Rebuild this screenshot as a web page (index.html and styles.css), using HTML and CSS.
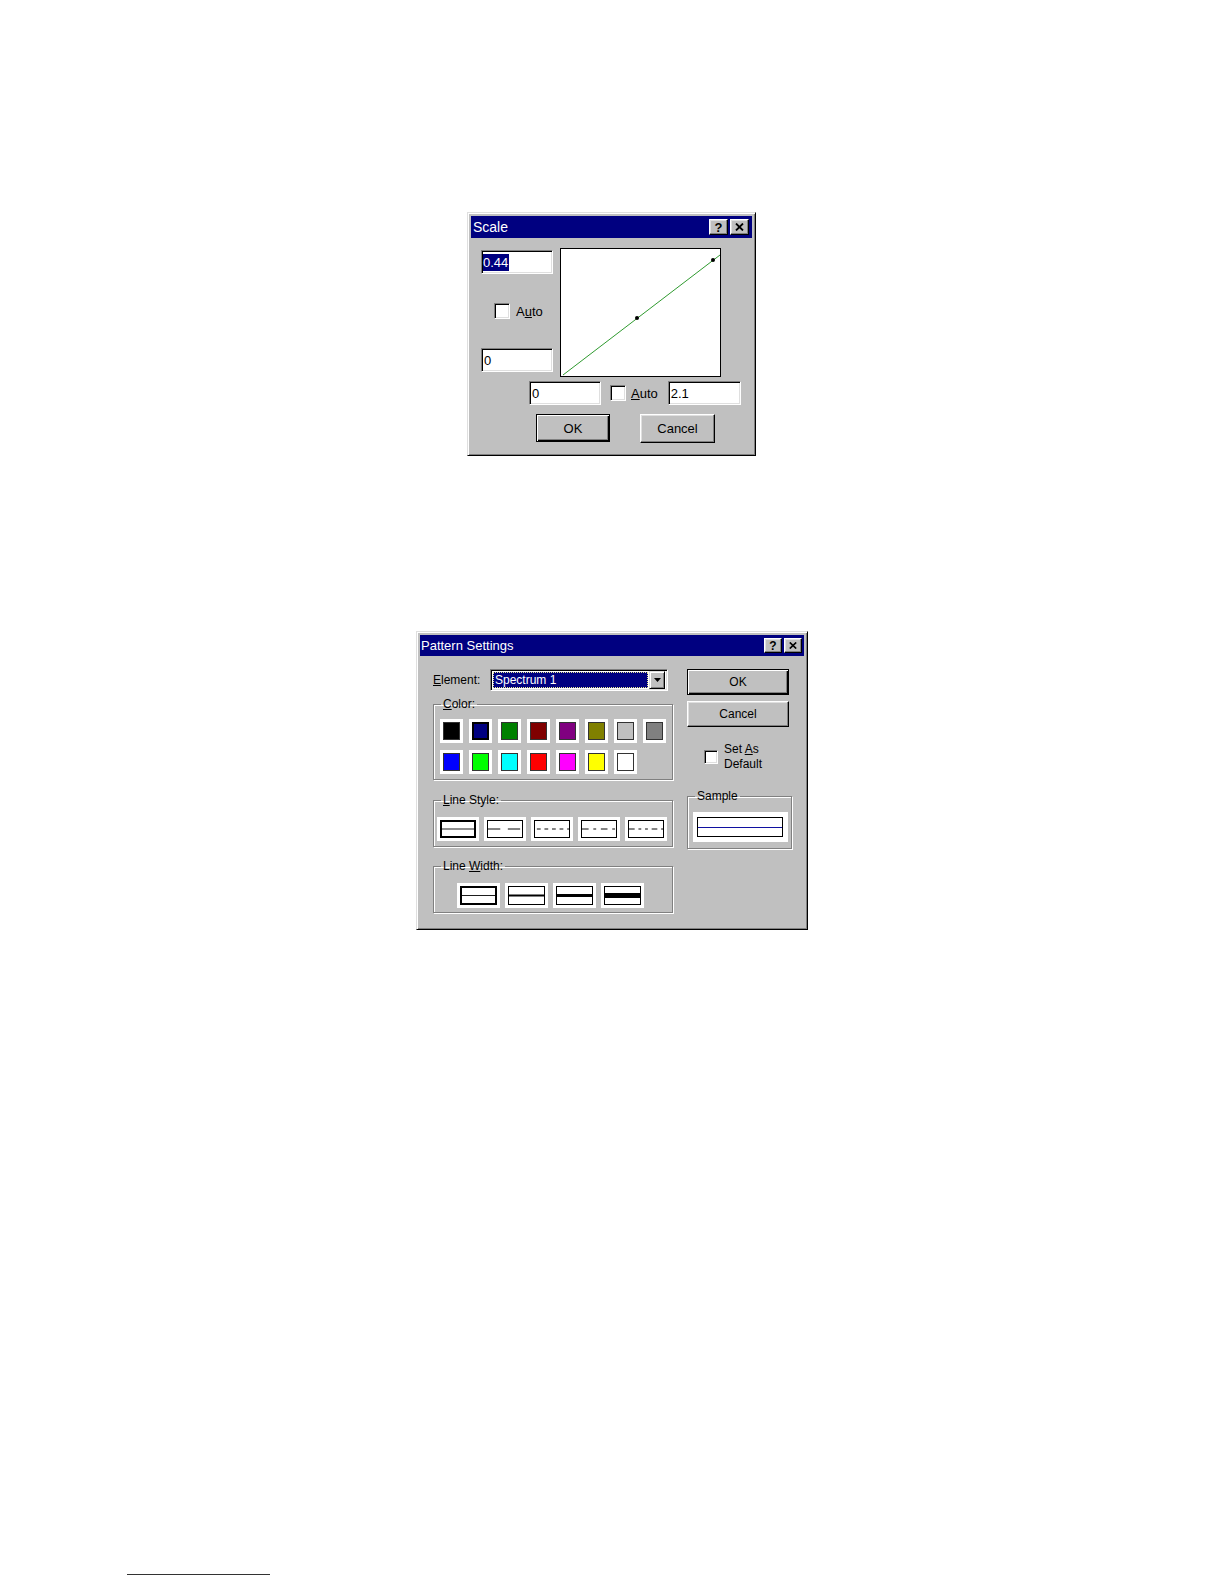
FILE: index.html
```html
<!DOCTYPE html>
<html>
<head>
<meta charset="utf-8">
<title>Dialogs</title>
<link rel="stylesheet" href="styles.css">
</head>
<body>
<div class="page">

  <div class="win scale">
    <div class="titlebar tb-scale">
      <span class="title">Scale</span>
      <span class="tbtns">
        <span class="tbtn help">?</span>
        <span class="tbtn close"><svg width="9" height="8" viewBox="0 0 9 8"><path d="M1 0.5 L8 7.5 M8 0.5 L1 7.5" stroke="#000" stroke-width="1.8" fill="none"/></svg></span>
      </span>
    </div>
    <div class="scale-body">
      <div class="scale-top">
        <div class="scale-left">
          <div class="field f-scale"><span class="sel">0.44</span></div>
          <div class="chk-row scale-chk"><span class="chk chk-lg"></span><span class="lbl">A<u>u</u>to</span></div>
          <div class="field f-scale">0</div>
        </div>
        <div class="plot">
          <svg width="159" height="127" viewBox="0 0 159 127">
            <line x1="2" y1="126" x2="159" y2="6" stroke="#2f9a2f" stroke-width="1"/>
            <circle cx="76" cy="69" r="2" fill="#000"/>
            <circle cx="152" cy="11" r="2" fill="#000"/>
          </svg>
        </div>
      </div>
      <div class="scale-axis">
        <div class="field f-scale">0</div>
        <span class="chk chk-lg axis-chk"></span>
        <span class="lbl axis-lbl"><u>A</u>uto</span>
        <div class="field f-scale axis-max">2.1</div>
      </div>
      <div class="scale-btns">
        <span class="btn btn-default sb-ok">OK</span>
        <span class="btn sb-cancel">Cancel</span>
      </div>
    </div>
  </div>

  <div class="win pattern">
    <div class="titlebar tb-pattern">
      <span class="title">Pattern Settings</span>
      <span class="tbtns">
        <span class="tbtn tbtn-sm help">?</span>
        <span class="tbtn tbtn-sm close"><svg width="8" height="7" viewBox="0 0 8 7"><path d="M0.8 0.5 L7.2 6.5 M7.2 0.5 L0.8 6.5" stroke="#000" stroke-width="1.7" fill="none"/></svg></span>
      </span>
    </div>
    <div class="pattern-body">
      <div class="pcol-left">
        <div class="elem-row">
          <span class="plbl"><u>E</u>lement:</span>
          <div class="combo">
            <div class="combo-sel"><span>Spectrum 1</span></div>
            <span class="combo-btn"><svg width="7" height="4" viewBox="0 0 7 4"><path d="M0 0 H7 L3.5 4 Z" fill="#000"/></svg></span>
          </div>
        </div>

        <fieldset class="group g-color">
          <legend><u>C</u>olor:</legend>
          <div class="swatches">
            <span class="sw"><i style="background:#000000"></i></span>
            <span class="sw sw-on"><i style="background:#000080"></i></span>
            <span class="sw"><i style="background:#008000"></i></span>
            <span class="sw"><i style="background:#800000"></i></span>
            <span class="sw"><i style="background:#800080"></i></span>
            <span class="sw"><i style="background:#808000"></i></span>
            <span class="sw"><i style="background:#c0c0c0"></i></span>
            <span class="sw"><i style="background:#808080"></i></span>
            <span class="sw"><i style="background:#0000ff"></i></span>
            <span class="sw"><i style="background:#00ff00"></i></span>
            <span class="sw"><i style="background:#00ffff"></i></span>
            <span class="sw"><i style="background:#ff0000"></i></span>
            <span class="sw"><i style="background:#ff00ff"></i></span>
            <span class="sw"><i style="background:#ffff00"></i></span>
            <span class="sw"><i style="background:#ffffff"></i></span>
          </div>
        </fieldset>

        <fieldset class="group g-style">
          <legend><u>L</u>ine Style:</legend>
          <div class="cells">
            <span class="cell"><span class="cbox cbox-on"><svg viewBox="0 0 36 16" preserveAspectRatio="none"><line x1="0" y1="8" x2="36" y2="8" stroke="#000" stroke-width="1"/></svg></span></span>
            <span class="cell"><span class="cbox"><svg viewBox="0 0 36 16" preserveAspectRatio="none"><line x1="0" y1="8" x2="36" y2="8" stroke="#000" stroke-width="1" stroke-dasharray="13 8"/></svg></span></span>
            <span class="cell"><span class="cbox"><svg viewBox="0 0 36 16" preserveAspectRatio="none"><line x1="2" y1="8" x2="36" y2="8" stroke="#000" stroke-width="1" stroke-dasharray="4 4"/></svg></span></span>
            <span class="cell"><span class="cbox"><svg viewBox="0 0 36 16" preserveAspectRatio="none"><line x1="0" y1="8" x2="36" y2="8" stroke="#000" stroke-width="1" stroke-dasharray="7 5 3 5"/></svg></span></span>
            <span class="cell"><span class="cbox"><svg viewBox="0 0 36 16" preserveAspectRatio="none"><line x1="0" y1="8" x2="36" y2="8" stroke="#000" stroke-width="1" stroke-dasharray="6 4 3 4 3 4"/></svg></span></span>
          </div>
        </fieldset>

        <fieldset class="group g-width">
          <legend>Line <u>W</u>idth:</legend>
          <div class="cells cells-w">
            <span class="cell"><span class="cbox cbox-on"><svg viewBox="0 0 37 17" preserveAspectRatio="none"><line x1="0" y1="8.5" x2="37" y2="8.5" stroke="#000" stroke-width="1"/></svg></span></span>
            <span class="cell"><span class="cbox"><svg viewBox="0 0 37 17" preserveAspectRatio="none"><line x1="0" y1="8.5" x2="37" y2="8.5" stroke="#000" stroke-width="2"/></svg></span></span>
            <span class="cell"><span class="cbox"><svg viewBox="0 0 37 17" preserveAspectRatio="none"><line x1="0" y1="8.5" x2="37" y2="8.5" stroke="#000" stroke-width="3"/></svg></span></span>
            <span class="cell"><span class="cbox"><svg viewBox="0 0 37 17" preserveAspectRatio="none"><line x1="0" y1="8.5" x2="37" y2="8.5" stroke="#000" stroke-width="5"/></svg></span></span>
          </div>
        </fieldset>
      </div>

      <div class="pcol-right">
        <span class="btn btn-default pb">OK</span>
        <span class="btn pb pb-cancel">Cancel</span>
        <div class="chk-row default-row">
          <span class="chk chk-sm"></span>
          <span class="plbl two-line">Set <u>A</u>s<br>Default</span>
        </div>
        <fieldset class="group g-sample">
          <legend>Sample</legend>
          <div class="sample-well">
            <div class="sample-box"><span class="sample-line"></span></div>
          </div>
        </fieldset>
      </div>
    </div>
  </div>

  <div class="footline"></div>
</div>
</body>
</html>
```

FILE: styles.css
```css
* { box-sizing: border-box; }

body {
  margin: 0;
  background: #ffffff;
  font-family: "Liberation Sans", Arial, sans-serif;
  color: #000;
}

.page {
  padding-top: 212px;
  padding-bottom: 17px;
}

u { text-decoration: underline; text-underline-offset: 1px; }

/* ---------- generic Win95 pieces ---------- */
.win {
  background: #c0c0c0;
  border: 1px solid;
  border-color: #dfdfdf #000 #000 #dfdfdf;
  box-shadow: inset 1px 1px #fff, inset -1px -1px #808080;
  padding: 3px;
}

.titlebar {
  background: #000080;
  color: #fff;
  display: flex;
  align-items: center;
  justify-content: space-between;
}

.tbtns { display: flex; gap: 2px; }

.tbtn {
  display: flex;
  align-items: center;
  justify-content: center;
  width: 19px;
  height: 16px;
  background: #c0c0c0;
  border: 1px solid;
  border-color: #fff #000 #000 #fff;
  box-shadow: inset -1px -1px #808080, inset 1px 1px #dfdfdf;
  color: #000;
  font-weight: bold;
  font-size: 13px;
  line-height: 1;
}

.tbtn-sm { width: 18px; height: 15px; font-size: 12px; }

.btn {
  display: flex;
  align-items: center;
  justify-content: center;
  background: #c0c0c0;
  border: 1px solid;
  border-color: #fff #000 #000 #fff;
  box-shadow: inset -1px -1px #808080, inset 1px 1px #dfdfdf;
}

.btn-default {
  border-color: #000;
  box-shadow: inset 1px 1px #fff, inset -1px -1px #000, inset -2px -2px #808080;
}

.field {
  background: #fff;
  border: 1px solid;
  border-color: #808080 #fff #fff #808080;
  box-shadow: inset 1px 1px #000, inset -1px -1px #dfdfdf;
  display: flex;
  align-items: center;
  padding-left: 2px;
}

.chk {
  display: inline-block;
  background: #fff;
  border: 1px solid;
  border-color: #808080 #fff #fff #808080;
  box-shadow: inset 1px 1px #000, inset -1px -1px #dfdfdf;
  flex: none;
}

.chk-lg { width: 16px; height: 16px; }
.chk-sm { width: 14px; height: 14px; }

.chk-row { display: flex; align-items: center; }

/* ---------- Scale dialog ---------- */
.scale {
  margin-left: 467px;
  width: 289px;
  height: 244px;
  font-size: 13px;
}

.tb-scale {
  height: 22px;
  padding: 0 3px 0 2px;
  font-size: 14px;
}

.scale-body { padding: 10px 0 0 10px; }

.scale-top { display: flex; gap: 7px; height: 129px; }

.scale-left {
  width: 72px;
  display: flex;
  flex-direction: column;
  justify-content: space-between;
  padding: 2px 0 5px;
}

.f-scale { width: 72px; height: 24px; font-size: 13px; }

.sel {
  background: #000080;
  color: #fff;
  line-height: 17px;
  padding: 0 1px 0 0;
  margin-left: -1px;
}

.scale-chk { margin-left: 13px; gap: 6px; }

.plot {
  width: 161px;
  height: 129px;
  background: #fff;
  border: 1px solid #000;
}

.plot svg { display: block; }

.scale-axis {
  display: flex;
  align-items: center;
  margin: 4px 0 0 48px;
}

.axis-chk { margin-left: 9px; }
.axis-lbl { margin-left: 5px; }
.axis-max { margin-left: 10px; width: 73px; }

.scale-btns {
  display: flex;
  gap: 30px;
  margin: 9px 0 0 55px;
  font-size: 13px;
}

.sb-ok { width: 74px; height: 28px; }
.sb-cancel { width: 75px; height: 29px; }

/* ---------- Pattern Settings dialog ---------- */
.pattern {
  margin-top: 175px;
  margin-left: 416px;
  width: 392px;
  height: 299px;
  font-size: 12px;
}

.tb-pattern {
  height: 21px;
  padding: 0 2px 0 1px;
  font-size: 13px;
}

.pattern-body {
  display: flex;
  gap: 14px;
  padding: 13px 0 0 13px;
}

.pcol-left { width: 240px; }

.elem-row {
  width: 235px;
  height: 22px;
  display: flex;
  align-items: center;
  justify-content: space-between;
}

.plbl { font-size: 12px; }

.combo {
  width: 178px;
  height: 22px;
  background: #fff;
  border: 1px solid;
  border-color: #808080 #fff #fff #808080;
  box-shadow: inset 1px 1px #000, inset -1px -1px #dfdfdf;
  display: flex;
  align-items: center;
  padding: 2px;
  gap: 1px;
}

.combo-sel {
  flex: 1;
  height: 16px;
  background: #000080;
  color: #fff;
  border: 1px dotted #e8e890;
  display: flex;
  align-items: center;
  padding-left: 1px;
  font-size: 12px;
}

.combo-btn {
  width: 16px;
  height: 18px;
  display: flex;
  align-items: center;
  justify-content: center;
  background: #c0c0c0;
  border: 1px solid;
  border-color: #dfdfdf #000 #000 #dfdfdf;
  box-shadow: inset 1px 1px #fff, inset -1px -1px #808080;
}

.combo-btn svg { display: block; }

.group {
  margin: 0;
  padding-left: 0;
  padding-right: 0;
  border: 1px solid #808080;
  box-shadow: inset 1px 1px #fff, 1px 1px #fff;
  min-inline-size: 0;
}

.group legend {
  padding: 0 2px;
  margin-left: 7px;
  font-size: 12px;
  line-height: 14px;
}

.g-color {
  margin-top: 6px;
  padding-top: 8px;
  padding-bottom: 5px;
  width: 240px;
}

.swatches {
  display: grid;
  grid-template-columns: repeat(8, 23px);
  grid-auto-rows: 24px;
  column-gap: 6px;
  row-gap: 7px;
  margin-left: 6px;
}

.sw {
  background: #fff;
  padding: 3px;
  display: block;
}

.sw i {
  display: block;
  width: 100%;
  height: 100%;
  border: 1px solid #333;
}

.sw-on i { border: 2px solid #000; }

.g-style {
  margin-top: 13px;
  padding-top: 10px;
  padding-bottom: 5px;
  width: 240px;
}

.cells { display: flex; gap: 5px; margin-left: 3px; }

.cell {
  display: block;
  width: 42px;
  height: 24px;
  background: #fff;
  padding: 3px;
}

.cbox {
  display: block;
  width: 100%;
  height: 100%;
  border: 1px solid #000;
}

.cbox-on { border-width: 2px; }

.cbox svg { display: block; width: 100%; height: 100%; }

.g-width {
  margin-top: 12px;
  padding-top: 10px;
  padding-bottom: 4px;
  width: 240px;
}

.cells-w { margin-left: 23px; }
.cells-w .cell { width: 43px; height: 25px; }

.pcol-right {
  width: 105px;
  display: flex;
  flex-direction: column;
}

.pb { width: 102px; height: 26px; font-size: 12px; }
.pb-cancel { margin-top: 6px; }

.default-row {
  margin: 15px 0 0 17px;
  gap: 6px;
}

.two-line { line-height: 15px; }

.g-sample {
  margin-top: 17px;
  width: 105px;
  padding-top: 9px;
  padding-bottom: 6px;
}

.sample-well {
  width: 95px;
  height: 30px;
  margin-left: 5px;
  background: #fff;
  padding: 5px 5px 5px 4px;
}

.sample-box {
  height: 100%;
  border: 1px solid #000;
  display: flex;
  align-items: center;
}

.sample-line {
  display: block;
  width: 100%;
  height: 1px;
  background: #1010a0;
}

/* ---------- footnote rule ---------- */
.footline {
  margin: 644px 0 0 127px;
  width: 143px;
  height: 1px;
  background: #333;
}
```
